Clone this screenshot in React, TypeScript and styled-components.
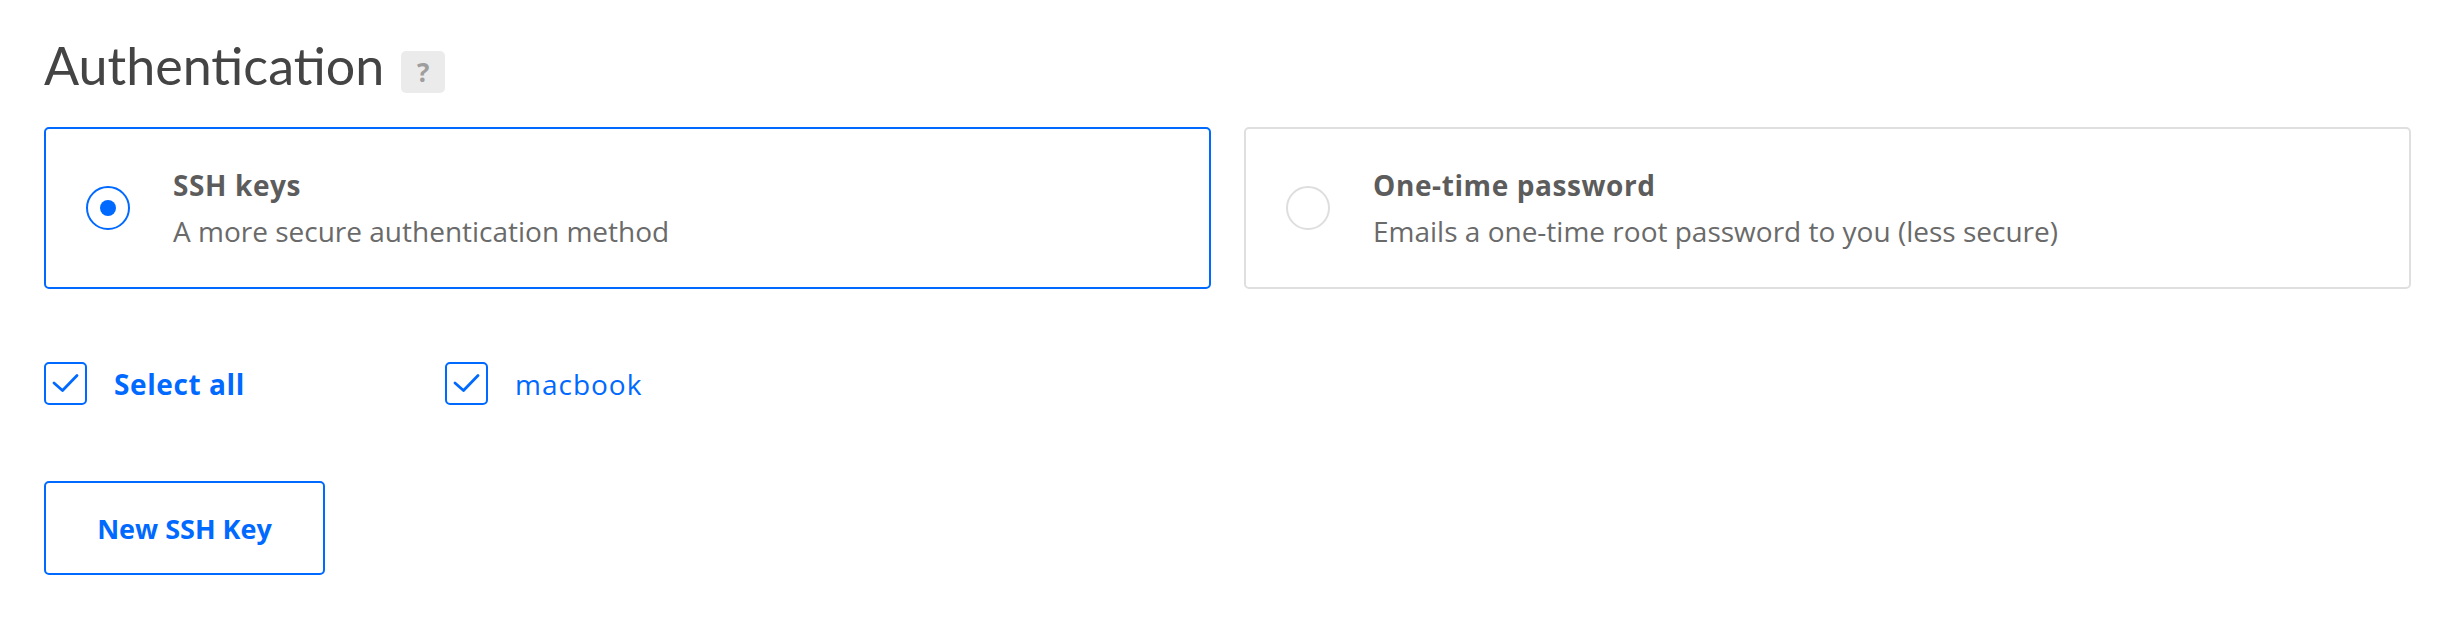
import styled, { createGlobalStyle } from 'styled-components'

const GlobalStyle = createGlobalStyle`
    html, body {
        margin: 0;
        padding: 0;
        background: #ffffff;
    }
    body {
        font-family: "Open Sans", "Liberation Sans", sans-serif;
    }
`

const blue = '#0069ff'

const PageStyled = styled.div`
    width: 2367px;
    padding: 39px 0 0 44px;
`
const HeaderStyled = styled.div`
    display: flex;
    align-items: flex-start;
    gap: 17px;
`
const TitleStyled = styled.h2`
    margin: 0;
    font-family: Lato, "Liberation Sans", sans-serif;
    font-size: 52px;
    line-height: 52px;
    font-weight: 400;
    color: #444444;
`
const HelpBadge = styled.span`
    margin-top: 12px;
    width: 44px;
    height: 42px;
    border-radius: 5px;
    background: #ebebeb;
    color: #9e9e9e;
    font-size: 26px;
    font-weight: 700;
    display: flex;
    align-items: center;
    justify-content: center;
`
const OptionsStyled = styled.div`
    margin-top: 34px;
    display: grid;
    grid-template-columns: 1fr 1fr;
    gap: 33px;
`
const OptionCard = styled.div<{ $active?: boolean }>`
    height: 162px;
    box-sizing: border-box;
    border: 2px solid ${p => (p.$active ? blue : '#dfdfdf')};
    border-radius: 5px;
    padding-left: 40px;
    display: flex;
    align-items: center;
    gap: 43px;
`
const Radio = styled.span<{ $checked?: boolean }>`
    flex: none;
    width: 44px;
    height: 44px;
    box-sizing: border-box;
    border-radius: 50%;
    border: 2px solid ${p => (p.$checked ? blue : '#dedede')};
    display: flex;
    align-items: center;
    justify-content: center;
    &::after {
        content: '';
        display: ${p => (p.$checked ? 'block' : 'none')};
        width: 16px;
        height: 16px;
        border-radius: 50%;
        background: ${blue};
    }
`
const OptionTitle = styled.div`
    font-size: 28px;
    line-height: 36px;
    font-weight: 700;
    letter-spacing: 0.6px;
    color: #5c5c5c;
    margin-bottom: 10px;
`
const OptionDesc = styled.div`
    font-size: 28px;
    line-height: 36px;
    color: #6a6a6a;
`
const KeysStyled = styled.div`
    margin-top: 73px;
    display: grid;
    grid-template-columns: 401px auto;
    justify-content: start;
`
const CheckItem = styled.label`
    display: flex;
    align-items: center;
    gap: 27px;
    cursor: pointer;
`
const CheckBox = styled.span`
    width: 43px;
    height: 43px;
    box-sizing: border-box;
    border: 2px solid ${blue};
    border-radius: 5px;
    display: flex;
    align-items: center;
    justify-content: center;
`
const CheckLabel = styled.span<{ $bold?: boolean }>`
    font-size: 28px;
    line-height: 36px;
    font-weight: ${p => (p.$bold ? 700 : 400)};
    letter-spacing: ${p => (p.$bold ? '0.6px' : '1px')};
    color: ${blue};
`
const ButtonStyled = styled.button`
    margin-top: 76px;
    width: 281px;
    height: 94px;
    box-sizing: border-box;
    border: 2px solid ${blue};
    border-radius: 5px;
    background: #ffffff;
    color: ${blue};
    font-family: inherit;
    font-size: 27px;
    font-weight: 700;
    cursor: pointer;
`

function Check() {
    return (
        <svg width="39" height="39" viewBox="0 0 39 39" fill="none">
            <polyline points="8,19 16.5,26.5 31,11.5" stroke={blue} strokeWidth="2.8" strokeLinecap="round" strokeLinejoin="round" />
        </svg>
    )
}

const options = [
    { title: 'SSH keys', desc: 'A more secure authentication method', active: true },
    { title: 'One-time password', desc: 'Emails a one-time root password to you (less secure)', active: false },
]

export default function App() {
    return (
        <PageStyled>
            <GlobalStyle />
            <HeaderStyled>
                <TitleStyled>Authentication</TitleStyled>
                <HelpBadge>?</HelpBadge>
            </HeaderStyled>
            <OptionsStyled>
                {options.map(o => (
                    <OptionCard key={o.title} $active={o.active}>
                        <Radio $checked={o.active} />
                        <div>
                            <OptionTitle>{o.title}</OptionTitle>
                            <OptionDesc>{o.desc}</OptionDesc>
                        </div>
                    </OptionCard>
                ))}
            </OptionsStyled>
            <KeysStyled>
                <CheckItem>
                    <CheckBox><Check /></CheckBox>
                    <CheckLabel $bold>Select all</CheckLabel>
                </CheckItem>
                <CheckItem>
                    <CheckBox><Check /></CheckBox>
                    <CheckLabel>macbook</CheckLabel>
                </CheckItem>
            </KeysStyled>
            <ButtonStyled>New SSH Key</ButtonStyled>
        </PageStyled>
    )
}
